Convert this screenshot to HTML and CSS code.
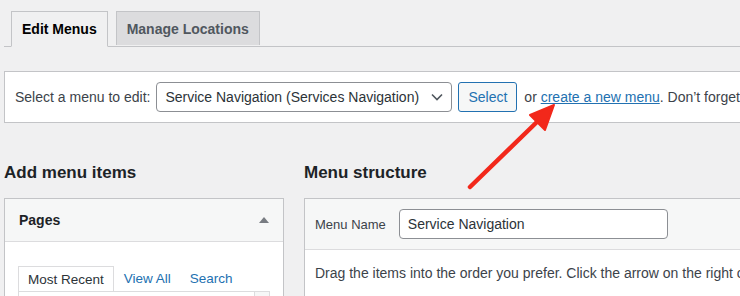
FILE: index.html
```html
<!DOCTYPE html>
<html lang="en">
<head>
    <meta charset="UTF-8">
    <title>Menus</title>
    <link rel="stylesheet" href="styles.css">
</head>
<body>
    <div class="wrap">
        <div class="nav-tabs">
            <a class="nav-tab active" href="#">Edit Menus</a>
            <a class="nav-tab" href="#">Manage Locations</a>
        </div>

        <div class="manage-menus">
            <label>Select a menu to edit:</label>
            <div class="select-box">
                <span>Service Navigation (Services Navigation)</span>
                <svg class="chevron" width="12" height="8" viewBox="0 0 12 8"><path d="M1 1.5l5 5 5-5" fill="none" stroke="#50575e" stroke-width="1.6"/></svg>
            </div>
            <button class="button">Select</button>
            <span class="hint">or <a href="#">create a new menu</a>. Don’t forget to save your changes!</span>
        </div>

        <div class="columns">
            <div class="col-left">
                <h2>Add menu items</h2>
                <div class="postbox">
                    <div class="postbox-head">
                        <span>Pages</span>
                        <span class="toggle"></span>
                    </div>
                    <div class="postbox-body">
                        <div class="tabs">
                            <span class="tab current">Most Recent</span>
                            <a class="tab" href="#">View All</a>
                            <a class="tab" href="#">Search</a>
                        </div>
                        <div class="tab-panel">
                            <div class="scrollbar"></div>
                        </div>
                    </div>
                </div>
            </div>
            <div class="col-right">
                <h2>Menu structure</h2>
                <div class="menu-edit">
                    <div class="menu-edit-head">
                        <label>Menu Name</label>
                        <div class="text-input">Service Navigation</div>
                    </div>
                    <div class="menu-edit-body">
                        <p>Drag the items into the order you prefer. Click the arrow on the right of the item to reveal additional configuration options.</p>
                    </div>
                </div>
            </div>
        </div>

        <!-- annotation arrow drawn over the page -->
        <svg class="arrow" width="740" height="296" viewBox="0 0 740 296">
            <line x1="470" y1="187" x2="540" y2="119" stroke="#f2281b" stroke-width="4.5" stroke-linecap="round"/>
            <polygon points="554,105 530,115 545,130" fill="#f2281b" stroke="#f2281b" stroke-width="2" stroke-linejoin="round"/>
        </svg>
    </div>
</body>
</html>
```

FILE: styles.css
```css
body {
    margin: 0;
    background-color: #f0f0f1;
    color: #1d2327;
    font-family: "Liberation Sans", Arial, sans-serif;
    font-size: 14px;
    overflow: hidden;
}

a {
    color: #2271b1;
}

.wrap {
    position: relative;
    width: 1000px;
    height: 296px;
    padding-left: 4px;
}

.nav-tabs {
    display: flex;
    gap: 8px;
    padding: 11px 0 0 7px;
    border-bottom: 1px solid #c3c4c7;
}

.nav-tab {
    display: block;
    padding: 0 10px;
    height: 33px;
    line-height: 34px;
    margin-bottom: -1px;
    border: 1px solid #c3c4c7;
    border-bottom: none;
    background-color: #dcdcde;
    color: #50575e;
    font-weight: 600;
    font-size: 14px;
    text-decoration: none;
}

.nav-tab.active {
    background-color: #f0f0f1;
    color: #000000;
    border-bottom: 1px solid #f0f0f1;
    height: 34px;
}

.manage-menus {
    display: flex;
    align-items: center;
    margin-top: 24px;
    height: 50px;
    padding-left: 10px;
    background-color: #ffffff;
    border: 1px solid #c3c4c7;
}

.manage-menus label {
    color: #3c434a;
    margin-right: 6px;
}

.select-box {
    display: flex;
    align-items: center;
    justify-content: space-between;
    width: 278px;
    height: 28px;
    padding: 0 8px;
    border: 1px solid #8c8f94;
    border-radius: 4px;
    font-size: 14px;
    color: #2c3338;
}

.chevron {
    margin-left: 6px;
}

.button {
    margin-left: 6px;
    height: 30px;
    padding: 0 9px;
    border: 1px solid #2271b1;
    border-radius: 3px;
    background-color: #f6f7f7;
    color: #2271b1;
    font-family: inherit;
    font-size: 14px;
}

.hint {
    margin-left: 7px;
    color: #3c434a;
    white-space: nowrap;
}

.columns {
    display: flex;
    gap: 20px;
}

.columns h2 {
    margin: 0;
    padding: 37px 0 12px;
    font-size: 17px;
    font-weight: 600;
    line-height: 26px;
}

.col-left {
    width: 280px;
    flex-shrink: 0;
}

.col-right {
    flex: 1;
    min-width: 0;
}

.postbox {
    background-color: #ffffff;
    border: 1px solid #c3c4c7;
}

.postbox-head {
    display: flex;
    justify-content: space-between;
    align-items: center;
    height: 42px;
    padding: 0 14px;
    background-color: #f6f7f7;
    border-bottom: 1px solid #dcdcde;
    font-weight: 600;
}

.toggle {
    width: 0;
    height: 0;
    border-left: 5px solid transparent;
    border-right: 5px solid transparent;
    border-bottom: 6px solid #787c82;
}

.postbox-body {
    padding: 24px 13px 0;
}

.tabs {
    display: flex;
    font-size: 13.5px;
}

.tab {
    padding: 0 10px;
    height: 24px;
    line-height: 25px;
    text-decoration: none;
}

.tab + .tab {
    padding-right: 9px;
}

.tab.current {
    border: 1px solid #dcdcde;
    border-bottom: none;
    padding: 0 9px;
    color: #2c3338;
}

.tab-panel {
    display: flex;
    justify-content: flex-end;
    height: 40px;
    border: 1px solid #dcdcde;
}

.scrollbar {
    width: 14px;
    background-color: #f6f7f7;
    border-left: 1px solid #dcdcde;
}

.menu-edit {
    background-color: #ffffff;
    border: 1px solid #c3c4c7;
}

.menu-edit-head {
    display: flex;
    align-items: center;
    height: 50px;
    padding-left: 10px;
    background-color: #f6f7f7;
    border-bottom: 1px solid #dcdcde;
}

.menu-edit-head label {
    color: #3c434a;
    font-size: 13px;
    margin-right: 13px;
}

.text-input {
    width: 251px;
    height: 28px;
    line-height: 28px;
    padding: 0 8px;
    background-color: #ffffff;
    border: 1px solid #8c8f94;
    border-radius: 4px;
    color: #2c3338;
}

.menu-edit-body {
    padding: 0 10px;
}

.menu-edit-body p {
    margin: 15px 0;
    font-size: 14px;
    color: #3c434a;
    white-space: nowrap;
}

.arrow {
    position: absolute;
    left: 0;
    top: 0;
    pointer-events: none;
}
```
